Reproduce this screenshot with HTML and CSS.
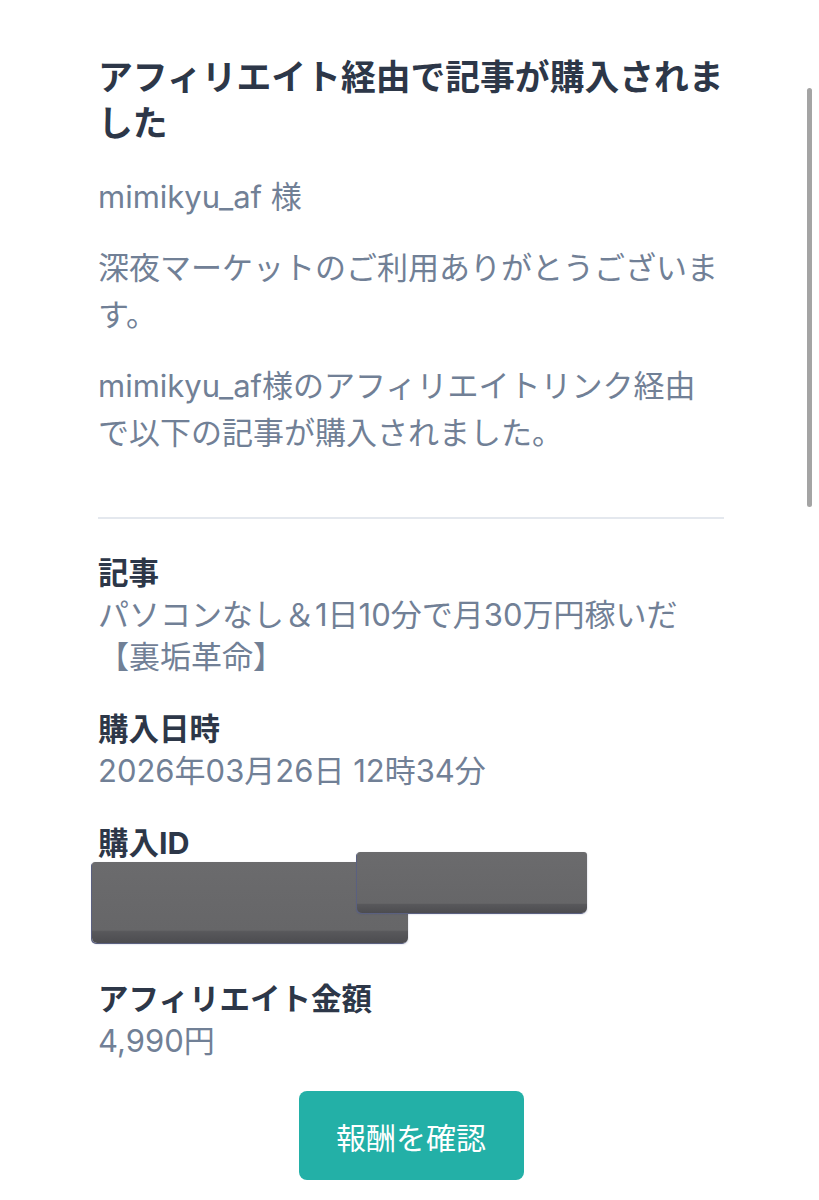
FILE: index.html
```html
<!DOCTYPE html>
<html lang="ja">
<head>
<meta charset="utf-8">
<title>アフィリエイト経由で記事が購入されました</title>
<link rel="stylesheet" href="styles.css">
</head>
<body>
<div class="page">
  <main class="mail">
    <h1 class="title">アフィリエイト経由で記事が購入されました</h1>
    <p class="para">mimikyu_af 様</p>
    <p class="para">深夜マーケットのご利用ありがとうございます。</p>
    <p class="para">mimikyu_af様のアフィリエイトリンク経由<br>で以下の記事が購入されました。</p>
    <hr class="divider">
    <dl class="details">
      <div class="item">
        <dt class="label">記事</dt>
        <dd class="value">パソコンなし＆1日10分で月30万円稼いだ<br>【裏垢革命】</dd>
      </div>
      <div class="item">
        <dt class="label">購入日時</dt>
        <dd class="value">2026年03月26日 12時34分</dd>
      </div>
      <div class="item">
        <dt class="label">購入ID</dt>
        <dd class="value value-id">
          <span class="redact redact-a"></span>
          <span class="redact redact-b"></span>
        </dd>
      </div>
      <div class="item">
        <dt class="label">アフィリエイト金額</dt>
        <dd class="value">4,990円</dd>
      </div>
    </dl>
    <div class="actions">
      <a class="button" href="#">報酬を確認</a>
    </div>
  </main>
  <div class="scrollbar"></div>
</div>
</body>
</html>
```
FILE: styles.css
```css
* { box-sizing: border-box; }
html, body {
  margin: 0;
  padding: 0;
  background: #ffffff;
}
body {
  font-family: Inter, "Noto Sans CJK JP", sans-serif;
  color: #718096;
}
.page {
  position: relative;
  width: 819px;
  min-height: 1200px;
  overflow: hidden;
}
.mail {
  width: 634px;
  margin-left: 98px;
  padding-top: 54px;
}
.title {
  margin: 0;
  font-size: 34.8px;
  line-height: 46px;
  font-weight: 700;
  color: #2d3748;
}
.para {
  margin: 24px 0 0;
  font-size: 31px;
  line-height: 47px;
  color: #718096;
}
.title + .para { margin-top: 27px; }
.divider {
  width: 626px;
  margin: 61px 0 0;
  border: 0;
  height: 2px;
  background: #e4e8ee;
}
.details {
  margin: 33px 0 0;
}
.item { margin-top: 30px; }
.item:first-child { margin-top: 0; }
.label {
  font-size: 30.5px;
  line-height: 42px;
  font-weight: 700;
  color: #2d3748;
}
.value {
  margin: 0;
  font-size: 31px;
  line-height: 42px;
  color: #718096;
}
.value-id {
  position: relative;
  height: 84px;
}
.redact {
  position: absolute;
  display: block;
  border-radius: 3px 3px 5px 5px;
  background: linear-gradient(to bottom, #6b6b6d 0%, #666668 84%, #58585b 86%, #4c4c50 100%);
  box-shadow: -1px 1px 0 #5a6080, 0 1px 2px rgba(60, 70, 120, 0.35);
}
.redact-a {
  left: -6px;
  top: -2px;
  width: 316px;
  height: 81px;
}
.redact-b {
  left: 259px;
  top: -12px;
  width: 230px;
  height: 61px;
}
.actions {
  display: flex;
  width: 626px;
  justify-content: center;
  margin-top: 29px;
}
.button {
  display: flex;
  align-items: center;
  justify-content: center;
  width: 225px;
  height: 89px;
  border-radius: 8px;
  background: #23b0a7;
  color: #ffffff;
  font-size: 30px;
  text-decoration: none;
}
.scrollbar {
  position: absolute;
  left: 807px;
  top: 88px;
  width: 5px;
  height: 419px;
  border-radius: 3px;
  background: #a4a4a4;
}
```
